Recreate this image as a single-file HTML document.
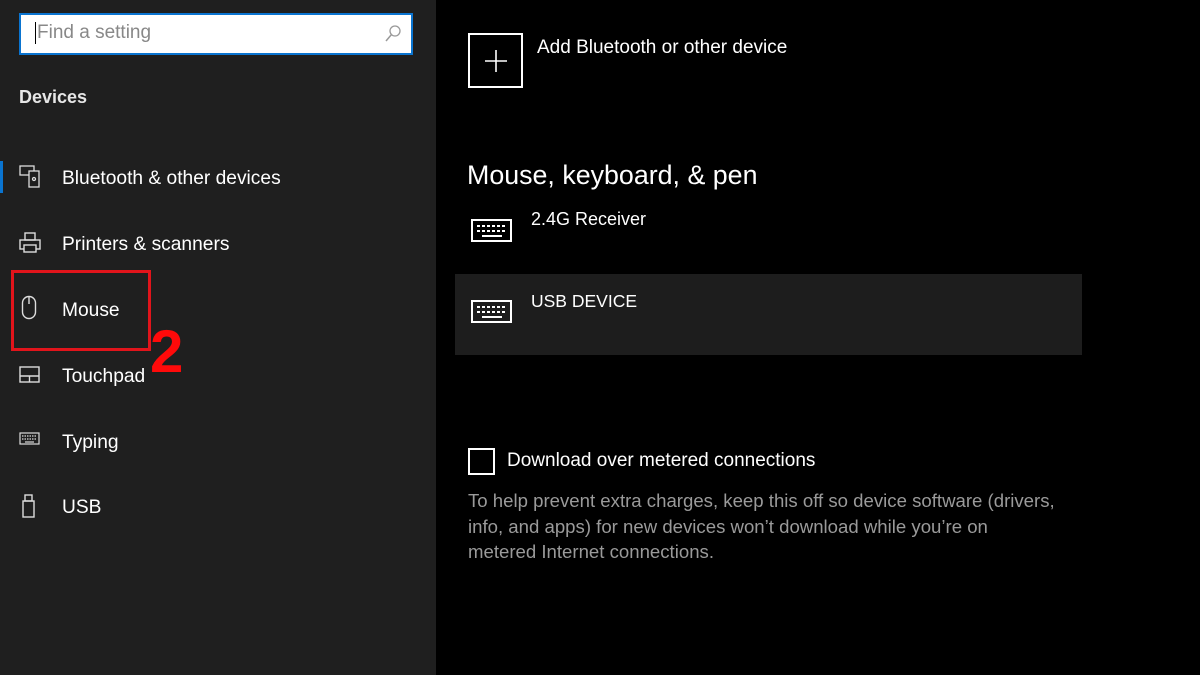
<!DOCTYPE html>
<html><head><meta charset="utf-8"><style>
*{margin:0;padding:0;box-sizing:border-box}
body{width:1200px;height:675px;background:#000;font-family:"Liberation Sans",sans-serif;color:#fff;position:relative;overflow:hidden}
.side{position:absolute;left:0;top:0;width:436px;height:675px;background:#1f1f1f}
.abs{position:absolute}
.nav{position:absolute;left:62px;font-size:19.2px;color:#fff}
svg{position:absolute}
</style></head><body>
<div class="side">
  <div class="abs" style="left:19px;top:13px;width:394px;height:42px;border:2px solid #0a74d0;background:#fff"></div>
  <div class="abs" style="left:35px;top:22px;width:1px;height:22px;background:#000"></div>
  <div class="abs" style="left:37px;top:22px;font-size:19px;color:#888">Find a setting</div>
  <svg style="left:384px;top:24px" width="18" height="20" viewBox="0 0 18 20"><circle cx="11" cy="7" r="5" fill="none" stroke="#999" stroke-width="1.3"/><line x1="7.5" y1="10.5" x2="2" y2="17" stroke="#999" stroke-width="1.5"/></svg>
  <div class="abs" style="left:19px;top:87px;font-size:18px;font-weight:bold;color:#e6e6e6">Devices</div>
  <div class="abs" style="left:0;top:161px;width:3px;height:32px;background:#0a74d0"></div>
  <svg style="left:19px;top:165px" width="24" height="24" viewBox="0 0 24 24" fill="none" stroke="#ddd" stroke-width="1.3"><rect x="1" y="1" width="14" height="9"/><rect x="10" y="6" width="10" height="16" fill="#1f1f1f"/><circle cx="15" cy="14" r="1.5"/></svg>
  <div class="nav" style="top:168px">Bluetooth &amp; other devices</div>
  <svg style="left:19px;top:232px" width="24" height="22" viewBox="0 0 24 22" fill="none" stroke="#ddd" stroke-width="1.4"><rect x="6" y="1" width="10" height="7"/><rect x="1" y="8" width="20" height="9"/><rect x="5" y="13" width="12" height="7" fill="#1f1f1f"/></svg>
  <div class="nav" style="top:234px">Printers &amp; scanners</div>
  <svg style="left:21px;top:295px" width="16" height="26" viewBox="0 0 16 26" fill="none" stroke="#ddd" stroke-width="1.4"><rect x="1.5" y="1.5" width="13" height="22" rx="6.5"/><line x1="8" y1="1.5" x2="8" y2="9"/></svg>
  <div class="nav" style="top:300px">Mouse</div>
  <svg style="left:19px;top:366px" width="22" height="18" viewBox="0 0 22 18" fill="none" stroke="#ddd" stroke-width="1.4"><rect x="1" y="1" width="19" height="15"/><line x1="1" y1="10" x2="20" y2="10"/><line x1="10.5" y1="10" x2="10.5" y2="16"/></svg>
  <div class="nav" style="top:366px">Touchpad</div>
  <svg style="left:19px;top:432px" width="22" height="14" viewBox="0 0 22 14" fill="none" stroke="#ddd" stroke-width="1.2"><rect x="1" y="1" width="19" height="11"/><line x1="3" y1="4" x2="18" y2="4" stroke-dasharray="1.5 1"/><line x1="3" y1="7" x2="18" y2="7" stroke-dasharray="1.5 1"/><line x1="6" y1="10" x2="15" y2="10"/></svg>
  <div class="nav" style="top:432px">Typing</div>
  <svg style="left:22px;top:494px" width="14" height="24" viewBox="0 0 14 24" fill="none" stroke="#ddd" stroke-width="1.4"><rect x="3" y="1" width="7" height="6"/><rect x="1" y="7" width="11" height="16"/></svg>
  <div class="nav" style="top:497px">USB</div>
</div>
<div class="abs" style="left:11px;top:270px;width:140px;height:81px;border:3px solid #e1141b"></div>
<div class="abs" style="left:150px;top:318px;font-size:60px;font-weight:bold;color:#ff0a0a;line-height:68px">2</div>

<div class="abs" style="left:468px;top:33px;width:55px;height:55px;border:2px solid #fff"></div>
<svg style="left:484px;top:49px" width="24" height="24" viewBox="0 0 24 24" stroke="#fff" stroke-width="1.6"><line x1="12" y1="1" x2="12" y2="23"/><line x1="1" y1="12" x2="23" y2="12"/></svg>
<div class="abs" style="left:537px;top:37px;font-size:19px">Add Bluetooth or other device</div>
<div class="abs" style="left:467px;top:160px;font-size:26.8px">Mouse, keyboard, &amp; pen</div>
<svg style="left:470px;top:218px" width="44" height="26" viewBox="0 0 44 26" fill="none" stroke="#fff" stroke-width="2"><rect x="2" y="2" width="39" height="21"/><line x1="7" y1="8" x2="37" y2="8" stroke-dasharray="3 2"/><line x1="7" y1="13" x2="37" y2="13" stroke-dasharray="3 2"/><line x1="12" y1="18" x2="32" y2="18"/></svg>
<div class="abs" style="left:531px;top:209px;font-size:18px">2.4G Receiver</div>
<div class="abs" style="left:455px;top:274px;width:627px;height:81px;background:#1d1d1d"></div>
<svg style="left:470px;top:299px" width="44" height="26" viewBox="0 0 44 26" fill="none" stroke="#fff" stroke-width="2"><rect x="2" y="2" width="39" height="21"/><line x1="7" y1="8" x2="37" y2="8" stroke-dasharray="3 2"/><line x1="7" y1="13" x2="37" y2="13" stroke-dasharray="3 2"/><line x1="12" y1="18" x2="32" y2="18"/></svg>
<div class="abs" style="left:531px;top:291px;font-size:17.5px">USB DEVICE</div>
<div class="abs" style="left:468px;top:448px;width:27px;height:27px;border:2px solid #fff"></div>
<div class="abs" style="left:507px;top:450px;font-size:19px">Download over metered connections</div>
<div class="abs" style="left:468px;top:488px;width:590px;font-size:18.6px;line-height:25.5px;color:#9a9a9a">To help prevent extra charges, keep this off so device software (drivers, info, and apps) for new devices won’t download while you’re on metered Internet connections.</div>
</body></html>
